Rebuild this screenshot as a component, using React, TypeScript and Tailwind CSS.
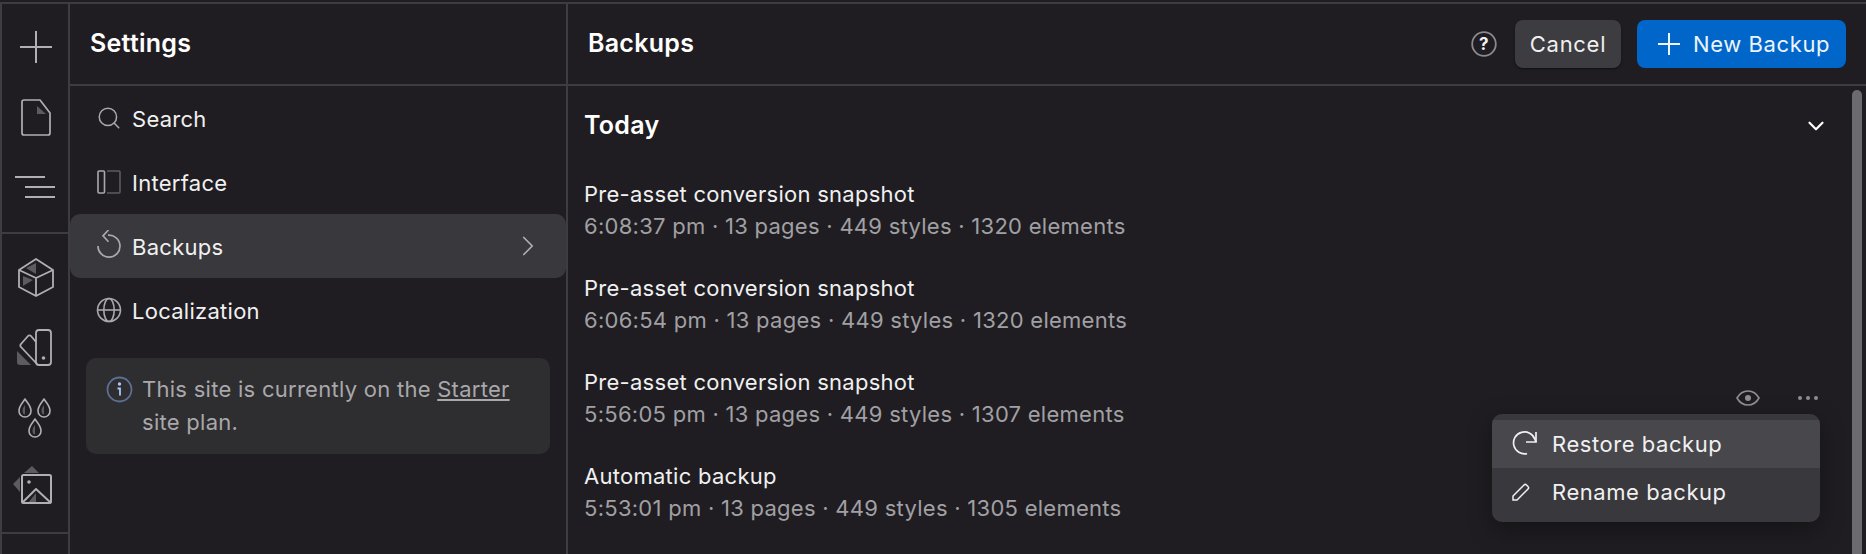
import { ChevronDown, ChevronRight, Search } from "lucide-react";

const backups = [
  { title: "Pre-asset conversion snapshot", meta: "6:08:37 pm · 13 pages · 449 styles · 1320 elements" },
  { title: "Pre-asset conversion snapshot", meta: "6:06:54 pm · 13 pages · 449 styles · 1320 elements" },
  { title: "Pre-asset conversion snapshot", meta: "5:56:05 pm · 13 pages · 449 styles · 1307 elements", active: true },
  { title: "Automatic backup", meta: "5:53:01 pm · 13 pages · 449 styles · 1305 elements" },
];

const dropPath = (cx: number, top: number) =>
  `M${cx} ${top}c2 3.5 6 6.5 6 12a6 6 0 0 1-12 0c0-5.5 4-8.5 6-12z`;

function RailIcon({ children }: { children: React.ReactNode }) {
  return (
    <div className="flex h-[70px] w-full items-center justify-center">
      <svg className="overflow-visible" width="44" height="44" viewBox="0 0 44 44" fill="none" stroke="#b0afb2" strokeWidth="2" strokeLinejoin="round">
        {children}
      </svg>
    </div>
  );
}

function InterfaceIcon() {
  return (
    <svg width="24" height="24" viewBox="0 0 24 24" fill="none" strokeWidth="1.6">
      <rect x="1" y="1" width="6.5" height="22" rx="1" stroke="#a9a8ab" />
      <path d="M10 1h12a1 1 0 0 1 1 1v20a1 1 0 0 1-1 1H10" stroke="#5c5b5f" />
    </svg>
  );
}

function BackupsIcon() {
  return (
    <svg width="24" height="32" viewBox="0 0 24 32" fill="none" stroke="#a9a8ab" strokeWidth="1.7">
      <path d="M11 5.2A11 11 0 1 1 1 16" />
      <path d="M11.5 0 6 5.8l5.5 6" />
    </svg>
  );
}

function GlobeIcon() {
  return (
    <svg width="26" height="26" viewBox="0 0 26 26" fill="none" stroke="#a9a8ab" strokeWidth="1.6">
      <circle cx="13" cy="13" r="11.5" />
      <ellipse cx="13" cy="13" rx="5.2" ry="11.5" />
      <path d="M1.5 13h23" />
    </svg>
  );
}

function NavItem({ icon, label, active }: { icon: React.ReactNode; label: string; active?: boolean }) {
  return (
    <div className={`flex h-16 items-center gap-[10px] rounded-[10px] pl-[26px] pr-[21px] ${active ? "bg-[#39383c]" : ""}`}>
      <div className="flex w-[26px] shrink-0 items-center justify-center">{icon}</div>
      <span className="pt-[2px] text-[22px] text-[#f0f0f1]">{label}</span>
      {active && <ChevronRight className="ml-auto size-[34px] text-[#b0afb2]" strokeWidth={1.2} />}
    </div>
  );
}

export default function App() {
  return (
    <div className="h-[554px] w-full overflow-hidden bg-[#1f1d21] pt-[2px] font-['Inter',sans-serif] tracking-[0.27px] text-white">
      <div className="flex h-full border-l-2 border-t-2 border-[#3d3c40]">
        {/* tool rail */}
        <div className="flex w-[68px] shrink-0 flex-col border-r-2 border-[#3d3c40] pl-[2px]">
          <div className="-ml-[2px] h-[230px] border-b-2 border-[#3d3c40] pl-[2px] pt-[8px]">
            <RailIcon>
              <path d="M22 6v32M6 22h32" />
            </RailIcon>
            <RailIcon>
              <path d="M10 5h16l10 13v20a2 2 0 0 1-2 2H10a2 2 0 0 1-2-2V7a2 2 0 0 1 2-2z" strokeWidth="1.7" />
              <path d="M23 11l9 8h-9z" fill="#5c5b5f" stroke="none" />
            </RailIcon>
            <RailIcon>
              <path d="M1 12h30M11 22h30M11 32h30" />
            </RailIcon>
          </div>
          <div className="-ml-[2px] h-[300px] border-b-2 border-[#3d3c40] pl-[2px] pt-[9px]">
            <RailIcon>
              <path d="M12 12l10-5v11zM9 20v10l10-6z" fill="#5c5b5f" stroke="none" />
              <path d="M22 3 39 14v17L22 40 5 31V14z" strokeWidth="1.8" />
              <path d="M5 14l17 8 17-8M22 22v18" strokeWidth="1.8" />
            </RailIcon>
            <RailIcon>
              <path d="M3 25 17 39H6a3 3 0 0 1-3-3z" fill="#5c5b5f" stroke="none" />
              <rect x="22" y="4" width="15" height="35" rx="3" strokeWidth="1.8" />
              <path d="M22 16l-5-6a2 2 0 0 0-3 0l-7 8a2 2 0 0 0 0 3l16 17" strokeWidth="1.8" />
              <circle cx="29.5" cy="32" r="1.8" fill="#b0afb2" stroke="none" />
            </RailIcon>
            <RailIcon>
              <path d="M11 9c-1.500 2-2.500 3.500-2.500 6s1.200 3.500 2.500 3.500zM30 9c-1.500 2-2.500 3.500-2.500 6s1.200 3.500 2.500 3.500zM21 29c-1.500 2-2.500 3.500-2.500 6s1.200 3.500 2.500 3.500z" fill="#5c5b5f" stroke="none" />
              <path d={dropPath(11, 3)} strokeWidth="1.6" />
              <path d={dropPath(30, 3)} strokeWidth="1.6" />
              <path d={dropPath(21, 23)} strokeWidth="1.6" />
            </RailIcon>
            <RailIcon>
              <path d="M18 0l7 7H10zM-1 18l7-7v15z" fill="#5c5b5f" stroke="none" />
              <path d="M22 27l-8 10h8z" fill="#5c5b5f" stroke="none" />
              <rect x="8" y="9" width="29" height="28" rx="1.5" />
              <path d="M8 37l14-14 15 14" />
              <circle cx="15" cy="16" r="1.8" fill="#b0afb2" stroke="none" />
            </RailIcon>
          </div>
        </div>

        {/* settings nav */}
        <div className="flex w-[498px] shrink-0 flex-col border-r-2 border-[#3d3c40]">
          <div className="flex h-[82px] shrink-0 items-center border-b-2 border-[#3d3c40] pl-5 text-[25px] font-semibold">
            Settings
          </div>
          <div>
            <NavItem icon={<Search className="size-[28px] text-[#a9a8ab]" strokeWidth={1.4} />} label="Search" />
            <NavItem icon={<InterfaceIcon />} label="Interface" />
            <NavItem icon={<BackupsIcon />} label="Backups" active />
            <NavItem icon={<GlobeIcon />} label="Localization" />
          </div>
          <div className="ml-4 mt-4 flex h-24 w-[464px] gap-[9px] rounded-[10px] bg-[#2e2d30] pl-5 pr-[24px] pt-[15px] text-[22px] leading-[33px] text-[#a9a8ab]">
            <svg className="mt-[3px] shrink-0" width="27" height="27" viewBox="0 0 27 27" fill="none">
              <circle cx="13.5" cy="13.5" r="12" stroke="#5d6f92" strokeWidth="1.8" />
              <circle cx="13.5" cy="8" r="1.7" fill="#a8c7f5" />
              <path d="M11.5 12.5h2.500v7" stroke="#a8c7f5" strokeWidth="1.8" />
            </svg>
            <p>
              This site is currently on the <span className="underline underline-offset-2">Starter</span> site plan.
            </p>
          </div>
        </div>

        {/* backups list */}
        <div className="relative min-w-0 flex-1">
          <div className="flex h-[82px] items-center border-b-2 border-[#3d3c40] pl-5 pr-5">
            <span className="text-[25px] font-semibold">Backups</span>
            <svg className="ml-auto" width="26" height="26" viewBox="0 0 26 26" fill="none">
              <circle cx="13" cy="13" r="11.8" stroke="#8a898d" strokeWidth="1.8" />
              <text x="13" y="19" textAnchor="middle" fontSize="17" fontWeight="700" fill="#f0f0f1" fontFamily="Inter">?</text>
            </svg>
            <button className="ml-[18px] h-12 w-[106px] rounded-[8px] bg-[#3d3c40] text-[22px] tracking-[0.7px] text-[#f0f0f1] shadow-[0_1px_2px_rgba(0,0,0,0.5)]">
              Cancel
            </button>
            <button className="ml-4 flex h-12 w-[209px] items-center gap-[13px] rounded-[8px] bg-[#0066c9] pl-[21px] text-[22px] tracking-[0.6px] text-[#eef4fc]">
              <svg width="22" height="22" viewBox="0 0 22 22" stroke="currentColor" strokeWidth="2">
                <path d="M11 0v22M0 11h22" />
              </svg>
              New Backup
            </button>
          </div>
          <div className="pl-4 pr-[37px] pt-[20px]">
            <div className="flex h-10 items-center justify-between">
              <span className="text-[25px] font-semibold">Today</span>
              <ChevronDown className="size-[26px]" strokeWidth={2} />
            </div>
            <div className="mt-8 flex flex-col gap-[30px]">
              {backups.map((b) => (
                <div key={b.meta} className="relative">
                  <div className="h-8 text-[22px] leading-8 text-[#f0f0f1]">{b.title}</div>
                  <div className="h-8 text-[22px] leading-8 text-[#a1a0a4]">{b.meta}</div>
                  {b.active && (
                    <div className="absolute right-[11px] top-[24px] flex items-center gap-[38px] text-[#8f8e92]">
                      <svg width="24" height="16" viewBox="0 0 24 16" fill="none" stroke="currentColor" strokeWidth="1.6">
                        <path d="M1 8c2.5-4.500 6.500-7 11-7s8.500 2.500 11 7c-2.500 4.500-6.500 7-11 7S3.500 12.500 1 8z" />
                        <circle cx="12" cy="8" r="3" fill="currentColor" stroke="none" />
                      </svg>
                      <svg width="20" height="4" viewBox="0 0 20 4" fill="currentColor">
                        <circle cx="2" cy="2" r="2" />
                        <circle cx="10" cy="2" r="2" />
                        <circle cx="18" cy="2" r="2" />
                      </svg>
                    </div>
                  )}
                </div>
              ))}
            </div>
          </div>
          {/* scrollbar */}
          <div className="absolute bottom-0 right-[4px] top-[86px] w-[10px] rounded-t-full bg-[#6b6a6e]" />
          {/* row menu */}
          <div className="absolute left-[924px] top-[410px] h-[108px] w-[328px] overflow-hidden rounded-[10px] bg-[#39383c] py-[6px] text-[22px] tracking-[0.55px] text-[#f0f0f1] shadow-[0_8px_24px_rgba(0,0,0,0.35)]">
            <div className="flex h-12 items-center gap-[14px] bg-[#48474b] pl-5">
              <svg className="shrink-0" width="26" height="26" viewBox="0 0 26 26" fill="none" stroke="currentColor" strokeWidth="1.7">
                <path d="M15 22.6A11 11 0 1 1 23 8.500l1 2.500" />
                <path d="M24 1v10H14" />
              </svg>
              Restore backup
            </div>
            <div className="flex h-12 items-center gap-[14px] pl-5">
              <span className="flex w-[26px] shrink-0">
                <svg width="18" height="18" viewBox="0 0 18 18" fill="none" stroke="currentColor" strokeWidth="1.5">
                  <path d="M1 17v-4L12 2a1.800 1.800 0 0 1 2.500 0l1.500 1.500a1.800 1.800 0 0 1 0 2.500L5 17z" />
                </svg>
              </span>
              Rename backup
            </div>
          </div>
        </div>
      </div>
    </div>
  );
}
